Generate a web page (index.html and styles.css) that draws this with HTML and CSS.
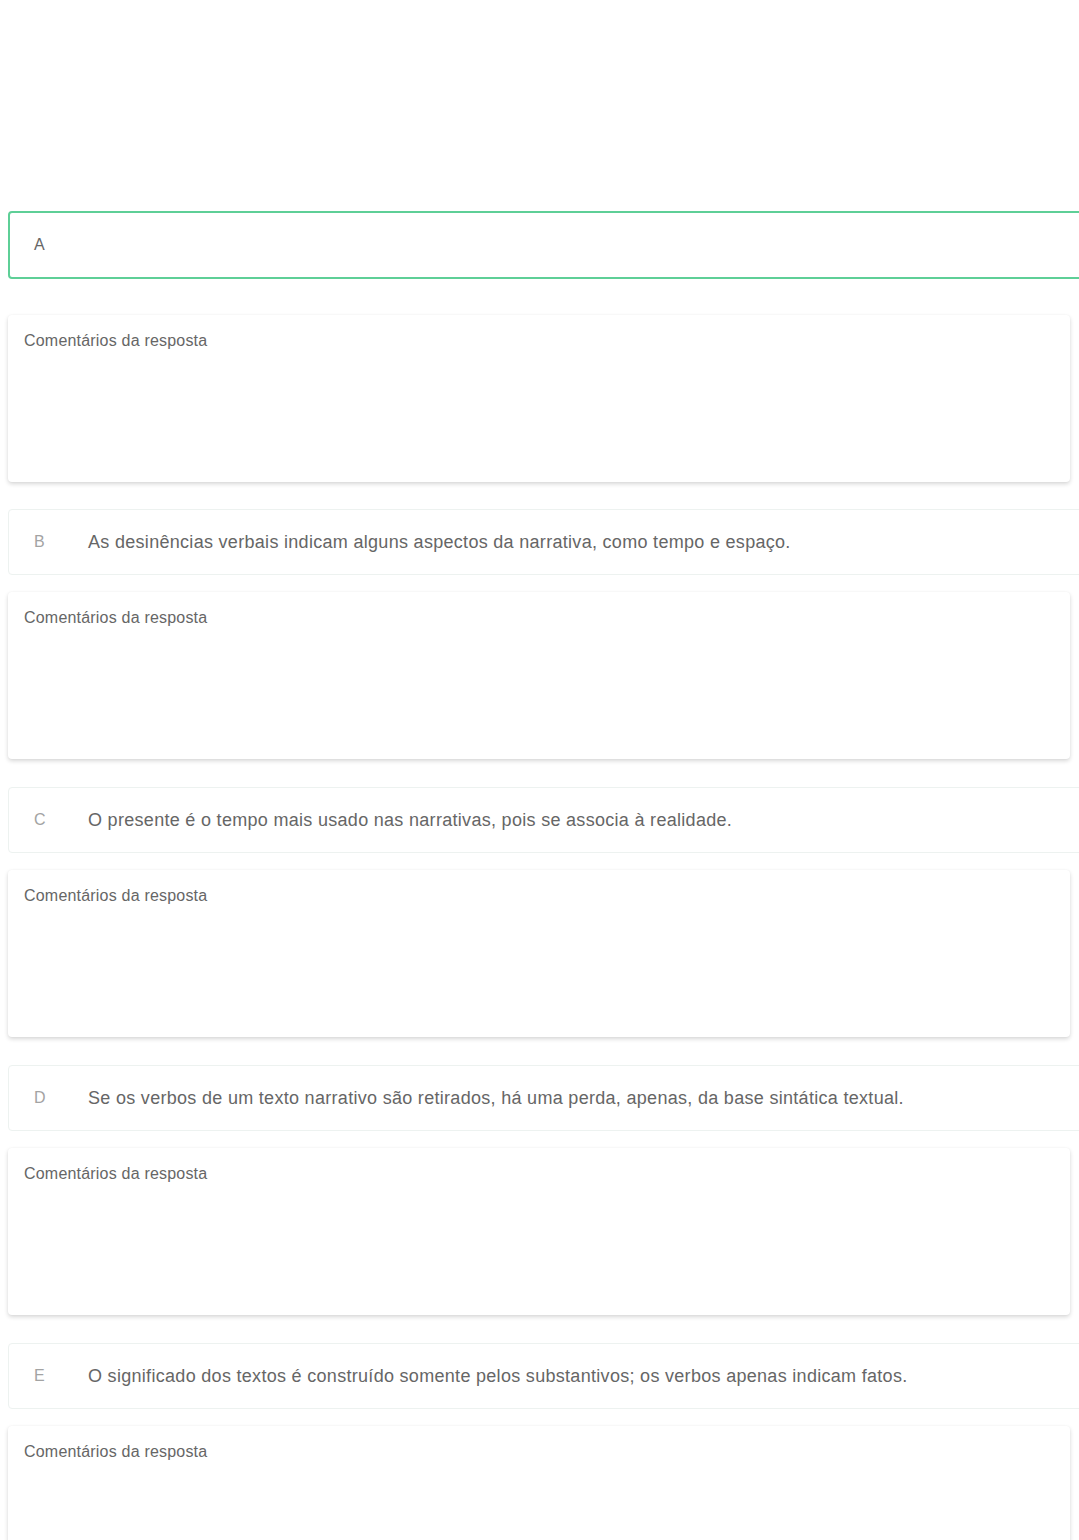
FILE: index.html
```html
<!DOCTYPE html>
<html lang="pt-BR">
<head>
    <meta charset="UTF-8">
    <meta name="viewport" content="width=device-width, initial-scale=1.0">
    <title>Questão</title>
    <link rel="stylesheet" href="styles.css">
</head>
<body>
    <div class="question">
        <div class="alternatives">
            <div class="option selected">
                <span class="letter">A</span>
                <span class="text"></span>
            </div>
            <div class="comment">Comentários da resposta</div>

            <div class="option">
                <span class="letter">B</span>
                <span class="text">As desinências verbais indicam alguns aspectos da narrativa, como tempo e espaço.</span>
            </div>
            <div class="comment">Comentários da resposta</div>

            <div class="option">
                <span class="letter">C</span>
                <span class="text">O presente é o tempo mais usado nas narrativas, pois se associa à realidade.</span>
            </div>
            <div class="comment">Comentários da resposta</div>

            <div class="option">
                <span class="letter">D</span>
                <span class="text">Se os verbos de um texto narrativo são retirados, há uma perda, apenas, da base sintática textual.</span>
            </div>
            <div class="comment">Comentários da resposta</div>

            <div class="option">
                <span class="letter">E</span>
                <span class="text">O significado dos textos é construído somente pelos substantivos; os verbos apenas indicam fatos.</span>
            </div>
            <div class="comment">Comentários da resposta</div>
        </div>
    </div>
</body>
</html>
```

FILE: styles.css
```css
html, body {
    overflow-x: hidden;
}

body {
    margin: 0;
    background: #ffffff;
    font-family: 'Liberation Sans', Arial, Helvetica, sans-serif;
    color: #666666;
}

.question {
    padding: 211px 0 40px 8px;
}

.alternatives {
    display: flex;
    flex-direction: column;
}

.option {
    display: flex;
    align-items: center;
    box-sizing: border-box;
    width: 1090px;
    height: 66px;
    padding-left: 25px;
    border: 1px solid #edf2f0;
    border-radius: 4px;
    margin-top: 28px;
    background: #ffffff;
}

.option.selected {
    height: 68px;
    margin-top: 0;
    padding-left: 24px;
    border: 2px solid #5ecf97;
    margin-bottom: 19px;
}

.selected + .comment + .option {
    margin-top: 27px;
}

.letter {
    width: 54px;
    flex-shrink: 0;
    font-size: 16px;
    color: #a3a3a3;
}

.selected .letter {
    color: #666666;
}

.text {
    font-size: 18px;
    letter-spacing: 0.3px;
    color: #666666;
}

.comment {
    box-sizing: border-box;
    width: 1062px;
    height: 167px;
    margin-top: 17px;
    padding: 17px 16px;
    font-size: 16px;
    letter-spacing: 0.2px;
    color: #666666;
    background: #ffffff;
    border-radius: 4px;
    box-shadow: 0 2px 4px rgba(0, 0, 0, 0.16), 0 0 2px rgba(0, 0, 0, 0.04);
}
```
